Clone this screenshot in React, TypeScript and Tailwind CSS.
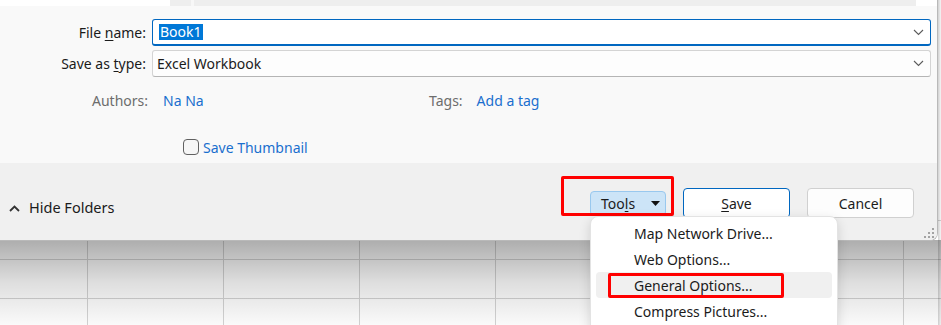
import React from "react";

const gridCols = [88, 136, 136, 136, 136, 136, 136, 136];
const gridRows = [39, 39, 39, 39, 39];

function Spreadsheet() {
  return (
    <div className="absolute inset-0 bg-white">
      <div className="flex flex-col pt-[182px]">
        {gridRows.map((h, r) => (
          <div key={r} className="flex" style={{ height: h }}>
            {gridCols.map((w, c) => (
              <div
                key={c}
                className="shrink-0 border-r border-b border-[#d4d4d4]"
                style={{ width: w }}
              />
            ))}
          </div>
        ))}
      </div>
      {/* shadow thrown by the dialog */}
      <div className="absolute left-0 right-0 top-[240px] bottom-0 bg-gradient-to-b from-[rgba(0,0,0,0.32)] via-[rgba(0,0,0,0.13)] to-[rgba(0,0,0,0.02)]" />
      <div className="absolute top-0 bottom-0 left-[938px] right-0 bg-gradient-to-r from-[rgba(0,0,0,0.18)] to-[rgba(0,0,0,0.04)]" />
    </div>
  );
}

function Chevron() {
  return (
    <svg width="11" height="7" viewBox="0 0 11 7" className="shrink-0">
      <path d="M1 1l4.5 4.5L10 1" fill="none" stroke="#5c5c5c" strokeWidth="1.1" />
    </svg>
  );
}

function ResizeGrip() {
  const dots = [
    [8, 0],
    [4, 4],
    [8, 4],
    [0, 8],
    [4, 8],
    [8, 8],
  ];
  return (
    <svg width="10" height="10" viewBox="0 0 10 10" className="absolute right-[3px] bottom-[2px]">
      {dots.map(([x, y], i) => (
        <rect key={i} x={x} y={y} width="2" height="2" fill="#a3a3a3" />
      ))}
    </svg>
  );
}

function ToolsMenu() {
  const items = ["Map Network Drive...", "Web Options...", "General Options...", "Compress Pictures..."];
  return (
    <div className="absolute left-[590px] top-[216px] w-[248px] h-[124px] bg-white border border-[#e3e3e3] rounded-[8px] shadow-[0_4px_12px_rgba(0,0,0,0.14)] px-[5px] pt-[3px]">
      {items.map((item, i) => (
        <div
          key={item}
          className={
            "h-[26px] flex items-center pl-[38px] rounded-[4px] text-[14px] text-[#1b1b1b] " +
            (i === 2 ? "bg-[#f0f0f0]" : "")
          }
        >
          {item}
        </div>
      ))}
      {/* annotation */}
      <div className="absolute left-[17px] top-[56px] w-[176px] h-[25px] border-[3px] border-[#ff0000] rounded-[2px]" />
    </div>
  );
}

export default function App() {
  return (
    <div className="relative w-[941px] h-[325px] overflow-hidden font-['Noto_Sans',sans-serif] text-[14px] text-[#1b1b1b]">
      <Spreadsheet />

      {/* Save As dialog */}
      <div className="absolute left-0 top-0 w-[938px] h-[241px] flex flex-col bg-[#f9f9f9] border-r border-b border-[#b9b9b9] rounded-br-[8px] overflow-hidden">
        {/* bottom edge of folder / file panes */}
        <div className="h-[6px] flex shrink-0">
          <div className="w-[170px] bg-white" />
          <div className="w-[21px] bg-[#eeeeee]" />
          <div className="w-[3px] bg-[#f7f7f7]" />
          <div className="flex-1 bg-[#eeeeee]" />
          <div className="w-[21px] bg-white" />
        </div>

        <div className="h-[157px] shrink-0 pt-[13px]">
          <div className="flex items-center h-[27px]">
            <div className="w-[146px] text-right">
              File <span className="underline underline-offset-2">n</span>ame:
            </div>
            <div className="ml-[6px] w-[779px] h-[27px] flex items-center justify-between bg-white border border-[#0067c0] border-b-2 rounded-[3px] pl-[6px] pr-[6px]">
              <span className="bg-[#0078d7] text-white leading-[16px] px-[1px]">Book1</span>
              <Chevron />
            </div>
          </div>

          <div className="flex items-center h-[27px] mt-[4px]">
            <div className="w-[146px] text-right">
              Save as <span className="underline underline-offset-2">t</span>ype:
            </div>
            <div className="ml-[6px] w-[779px] h-[27px] flex items-center justify-between bg-[#fdfdfd] border border-[#d4d4d4] border-b-[#b5b5b5] rounded-[3px] pl-[4px] pr-[6px]">
              <span>Excel Workbook</span>
              <Chevron />
            </div>
          </div>

          <div className="flex items-center h-[20px] mt-[13px]">
            <div className="w-[148px] text-right text-[#6d6d6d]">Authors:</div>
            <div className="ml-[15px] w-[266px] text-[#1a6fce]">Na Na</div>
            <div className="text-[#6d6d6d]">Tags:</div>
            <div className="ml-[14px] text-[#1a6fce]">Add a tag</div>
          </div>

          <div className="flex items-center h-[18px] mt-[28px] pl-[183px]">
            <div className="w-[16px] h-[16px] rounded-[4px] border border-[#616161] bg-[#f6f6f6]" />
            <span className="ml-[4px] text-[#1a6fce]">Save Thumbnail</span>
          </div>
        </div>

        {/* footer */}
        <div className="relative flex-1 flex bg-[#f0f0f0]">
          <div className="flex items-center gap-[9px] pl-[9px] mt-[35px] h-[20px]">
            <svg width="11" height="7" viewBox="0 0 11 7">
              <path d="M1 6l4.5-4.5L10 6" fill="none" stroke="#333" strokeWidth="1.8" />
            </svg>
            <span className="text-[14.5px]">Hide Folders</span>
          </div>

          <div className="flex-1" />

          <div className="flex items-start pr-[23px]">
            <div className="mt-[28px] w-[76px] h-[25px] flex items-center pl-[10px] bg-[#cce4f7] border border-[#99c8ee] rounded-[4px]">
              <span>
                Too<span className="underline underline-offset-2">l</span>s
              </span>
              <svg width="9" height="5" viewBox="0 0 9 5" className="ml-[16px]">
                <path d="M0 0h9L4.5 5z" fill="#111" />
              </svg>
            </div>
            <div className="ml-[17px] mt-[25px] w-[107px] h-[30px] flex items-center justify-center bg-white border border-[#0067c0] rounded-[4px]">
              <span>
                <span className="underline underline-offset-2">S</span>ave
              </span>
            </div>
            <div className="ml-[17px] mt-[25px] w-[107px] h-[30px] flex items-center justify-center bg-[#fdfdfd] border border-[#d0d0d0] rounded-[4px]">
              Cancel
            </div>
          </div>

          <ResizeGrip />
        </div>
      </div>

      {/* annotation around Tools */}
      <div className="absolute left-[561px] top-[176px] w-[113px] h-[40px] border-[3px] border-[#ff0000] rounded-[2px]" />

      <ToolsMenu />
    </div>
  );
}
